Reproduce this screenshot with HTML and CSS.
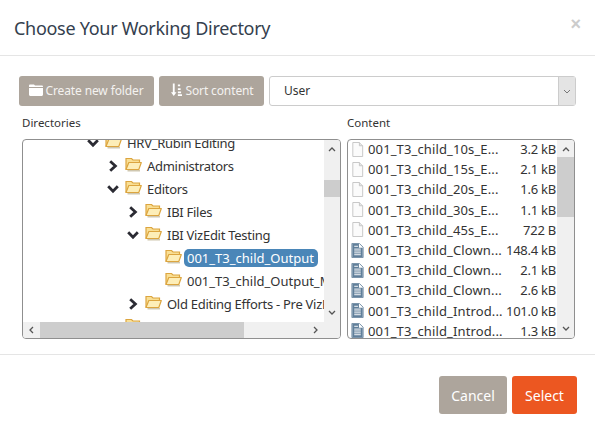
FILE: index.html
```html
<!DOCTYPE html>
<html lang="en">
<head>
<meta charset="utf-8">
<title>Choose Your Working Directory</title>
<link rel="stylesheet" href="styles.css">
</head>
<body>
<svg class="defs" width="0" height="0" aria-hidden="true">
  <symbol id="folder" viewBox="0 0 17 15">
    <path d="M2.500 13.700H15" stroke="#cfc7b0" stroke-width="1.500"/>
    <path d="M1 12.500V1.500H6.500L8 3H14.500V5" fill="#f9df94" stroke="#dca53f" stroke-width="1.200"/>
    <path d="M1 12.500L3.800 5.500H16.300L13.800 12.500Z" fill="#fdeeb8" stroke="#dca53f" stroke-width="1.200" stroke-linejoin="round"/>
  </symbol>
  <symbol id="right" viewBox="0 0 10 12">
    <path d="M2.200 1.200L7.400 6L2.200 10.800" fill="none" stroke="#2b2b33" stroke-width="2.800"/>
  </symbol>
  <symbol id="down" viewBox="0 0 12 10">
    <path d="M1.200 2.200L6 7.200L10.800 2.200" fill="none" stroke="#2b2b33" stroke-width="2.800"/>
  </symbol>
  <symbol id="plain" viewBox="0 0 13 16">
    <path d="M1.500.5H8.500L12 4V15.500H1.500Z" fill="#fbfbfb" stroke="#c4c4c4"/>
    <path d="M8.500.5V4H12" fill="#e6e6e6" stroke="#c4c4c4"/>
  </symbol>
  <symbol id="doc" viewBox="0 0 13 16">
    <path d="M.5.5H8.500L12.500 4.500V15.500H.5Z" fill="#fff" stroke="#6f8ba3"/>
    <path d="M1 1H8V5H12V15H1Z" fill="#607f9a"/>
    <path d="M3 3.500H7M3 6.500H10M3 8.500H10M3 10.500H10M3 12.500H10" stroke="#fff" stroke-width="1"/>
  </symbol>
</svg>
<main class="modal">
  <header class="modal-header">
    <h1 class="modal-title">Choose Your Working Directory</h1>
    <span class="close">×</span>
  </header>
  <section class="modal-body">
    <div class="toolbar">
      <button class="btn btn-tool btn-create">
        <svg class="tool-icon" viewBox="0 0 14 12"><path d="M0 3V1.600C0 .9.5.5 1.200.5H5L6 1.500H12.800C13.500 1.500 14 2 14 2.600V3ZM0 4H14V10.600C14 11.400 13.500 12 12.800 12H1.200C.5 12 0 11.400 0 10.600Z" fill="#fff"/></svg>Create new folder
      </button>
      <button class="btn btn-tool btn-sort">
        <svg class="tool-icon sort-icon" viewBox="0 0 12 14"><path d="M2 0H4V9.500H6L3 13.500L0 9.500H2Z" fill="#fff"/><path d="M7.500 1H10V3H7.500ZM7.500 5H10.500V7H7.500ZM7.500 8.500H11V10.500H7.500ZM7.500 11.500H12V13.500H7.500Z" fill="#fff"/></svg>Sort content
      </button>
      <div class="select">
        <span class="select-value">User</span>
        <span class="select-arrow"><svg width="8" height="5" viewBox="0 0 8 5"><path d="M1 1L4 4L7 1" fill="none" stroke="#777" stroke-width="1"/></svg></span>
      </div>
    </div>
    <div class="columns">
      <div class="col col-dirs">
        <div class="col-label">Directories</div>
        <div class="panel panel-tree">
          <div class="viewport">
            <ul class="tree">
              <li class="node d0"><svg class="chev chev-d"><use href="#down"/></svg><svg class="folder"><use href="#folder"/></svg><span class="name">HRV_Rubin Editing</span></li>
              <li class="node d1"><svg class="chev chev-r"><use href="#right"/></svg><svg class="folder"><use href="#folder"/></svg><span class="name">Administrators</span></li>
              <li class="node d1"><svg class="chev chev-d"><use href="#down"/></svg><svg class="folder"><use href="#folder"/></svg><span class="name">Editors</span></li>
              <li class="node d2"><svg class="chev chev-r"><use href="#right"/></svg><svg class="folder"><use href="#folder"/></svg><span class="name">IBI Files</span></li>
              <li class="node d2"><svg class="chev chev-d"><use href="#down"/></svg><svg class="folder"><use href="#folder"/></svg><span class="name">IBI VizEdit Testing</span></li>
              <li class="node d3"><span class="chev"></span><svg class="folder"><use href="#folder"/></svg><span class="name num selected">001_T3_child_Output</span></li>
              <li class="node d3"><span class="chev"></span><svg class="folder"><use href="#folder"/></svg><span class="name num">001_T3_child_Output_Manual</span></li>
              <li class="node d2"><svg class="chev chev-r"><use href="#right"/></svg><svg class="folder"><use href="#folder"/></svg><span class="name">Old Editing Efforts - Pre VizEdit</span></li>
              <li class="node d1"><span class="chev"></span><svg class="folder"><use href="#folder"/></svg><span class="name">Tech</span></li>
            </ul>
          </div>
          <div class="vbar vbar-tree">
            <svg class="arrow" viewBox="0 0 8 5"><path d="M1 4L4 1L7 4" fill="none" stroke="#555" stroke-width="1.300"/></svg>
            <div class="track"><div class="thumb"></div></div>
            <svg class="arrow" viewBox="0 0 8 5"><path d="M1 1L4 4L7 1" fill="none" stroke="#555" stroke-width="1.300"/></svg>
          </div>
          <div class="hbar">
            <svg class="arrow-h" viewBox="0 0 5 8"><path d="M4 1L1 4L4 7" fill="none" stroke="#555" stroke-width="1.300"/></svg>
            <div class="htrack"><div class="hthumb"></div></div>
            <svg class="arrow-h" viewBox="0 0 5 8"><path d="M1 1L4 4L1 7" fill="none" stroke="#555" stroke-width="1.300"/></svg>
          </div>
          <div class="corner"></div>
        </div>
      </div>
      <div class="col col-content">
        <div class="col-label">Content</div>
        <div class="panel panel-files">
          <ul class="files">
            <li class="file"><svg class="file-icon"><use href="#plain"/></svg><span class="file-name">001_T3_child_10s_E...</span><span class="file-size">3.2 kB</span></li>
            <li class="file"><svg class="file-icon"><use href="#plain"/></svg><span class="file-name">001_T3_child_15s_E...</span><span class="file-size">2.1 kB</span></li>
            <li class="file"><svg class="file-icon"><use href="#plain"/></svg><span class="file-name">001_T3_child_20s_E...</span><span class="file-size">1.6 kB</span></li>
            <li class="file"><svg class="file-icon"><use href="#plain"/></svg><span class="file-name">001_T3_child_30s_E...</span><span class="file-size">1.1 kB</span></li>
            <li class="file"><svg class="file-icon"><use href="#plain"/></svg><span class="file-name">001_T3_child_45s_E...</span><span class="file-size">722 B</span></li>
            <li class="file"><svg class="file-icon"><use href="#doc"/></svg><span class="file-name">001_T3_child_Clown...</span><span class="file-size">148.4 kB</span></li>
            <li class="file"><svg class="file-icon"><use href="#doc"/></svg><span class="file-name">001_T3_child_Clown...</span><span class="file-size">2.1 kB</span></li>
            <li class="file"><svg class="file-icon"><use href="#doc"/></svg><span class="file-name">001_T3_child_Clown...</span><span class="file-size">2.6 kB</span></li>
            <li class="file"><svg class="file-icon"><use href="#doc"/></svg><span class="file-name">001_T3_child_Introd...</span><span class="file-size">101.0 kB</span></li>
            <li class="file"><svg class="file-icon"><use href="#doc"/></svg><span class="file-name">001_T3_child_Introd...</span><span class="file-size">1.3 kB</span></li>
          </ul>
          <div class="vbar vbar-files">
            <svg class="arrow" viewBox="0 0 8 5"><path d="M1 4L4 1L7 4" fill="none" stroke="#555" stroke-width="1.300"/></svg>
            <div class="track"><div class="thumb"></div></div>
            <svg class="arrow" viewBox="0 0 8 5"><path d="M1 1L4 4L7 1" fill="none" stroke="#555" stroke-width="1.300"/></svg>
          </div>
        </div>
      </div>
    </div>
  </section>
  <footer class="modal-footer">
    <button class="btn btn-cancel">Cancel</button>
    <button class="btn btn-select">Select</button>
  </footer>
</main>
</body>
</html>
```
FILE: styles.css
```css
* { box-sizing: border-box; }
html, body { margin: 0; padding: 0; }
body {
  width: 595px;
  height: 433px;
  overflow: hidden;
  background: #fff;
  color: #2f3640;
  font-family: "Noto Sans", "Open Sans", sans-serif;
}
.defs { position: absolute; }
.modal { display: flex; flex-direction: column; height: 433px; }

.modal-header {
  height: 56px;
  padding: 0 14px;
  border-bottom: 1px solid #e5e5e5;
  display: flex;
  align-items: center;
  justify-content: space-between;
}
.modal-title {
  margin: 0;
  font-size: 18px;
  font-weight: 400;
  color: #34404e;
  letter-spacing: -.29px;
}
.close { color: #ccc; font-size: 18px; font-weight: 700; line-height: 1; font-family: "Liberation Sans", sans-serif; margin-bottom: 8px; }

.modal-body { height: 298px; padding: 20px 19px 0; }
.toolbar { display: flex; gap: 5px; height: 30px; }
.btn {
  border: 0;
  border-radius: 3px;
  color: #fff;
  background: #ada59c;
  font-family: inherit;
  padding: 0;
  display: flex;
  align-items: center;
  justify-content: center;
}
.btn-tool { font-size: 12px; color: #f4f2f0; letter-spacing: -.01em; padding-bottom: 2px; }
.btn-create { width: 135px; }
.btn-sort { width: 105px; padding-left: 2px; }
.tool-icon { width: 14px; height: 12px; margin-right: 2px; }
.sort-icon { width: 11px; height: 14px; margin-right: 3px; }
.select {
  width: 307px;
  border: 1px solid #ccc;
  border-radius: 3px;
  display: flex;
  align-items: stretch;
  justify-content: space-between;
  font-size: 12px;
  color: #333;
}
.select-value { padding: 0 0 2px 14px; align-self: center; }
.select-arrow {
  width: 17px;
  background: #e4e4e4;
  border-left: 1px solid #ccc;
  display: flex;
  align-items: center;
  justify-content: center;
}

.columns { display: flex; gap: 6px; margin-top: 9px; padding-left: 3px; }
.col-label { font-size: 11.500px; height: 24px; line-height: 16px; color: #333; }
.col-dirs { width: 319px; }
.col-content { width: 228px; }

.panel {
  height: 200px;
  border: 1px solid #8f8f8f;
  border-radius: 4px;
  overflow: hidden;
  display: grid;
  background: #fff;
}
.panel-tree { grid-template-columns: 1fr 16px; grid-template-rows: 1fr 16px; }
.panel-files { grid-template-columns: 1fr 17px; }

.viewport { overflow: hidden; min-width: 0; }
.tree { list-style: none; margin: -9px 0 0; padding: 0; width: 360px; }
.node {
  height: 23px;
  display: flex;
  align-items: center;
  white-space: nowrap;
  font-size: 13px;
  color: #333;
}
.d0 { padding-left: 63px; }
.d1 { padding-left: 83px; }
.d2 { padding-left: 103px; }
.d3 { padding-left: 123px; }
.chev { width: 14px; height: 12px; flex: none; }
.chev-d { height: 10px; }
.folder { width: 17px; height: 15px; flex: none; margin: -3px 2px 0 5px; }
.name { padding: 0 4px 0 3px; line-height: 18px; border-radius: 5px; letter-spacing: -.28px; }
.num { letter-spacing: 0; }
.selected { background: #4a86b8; color: #fff; }

.vbar {
  background: #f0f0f0;
  display: flex;
  flex-direction: column;
  align-items: center;
}
.arrow { width: 8px; height: 5px; margin: 7px 0; flex: none; }
.track { flex: 1; width: 100%; min-height: 0; }
.thumb { background: #cdcdcd; }
.vbar-tree .thumb { height: 17px; margin-top: 21px; }
.vbar-files .thumb { height: 60px; margin-top: -2px; }

.hbar {
  background: #f0f0f0;
  display: flex;
  align-items: center;
}
.corner { background: #f0f0f0; }
.arrow-h { width: 5px; height: 8px; margin: 0 6px; flex: none; }
.htrack { flex: 1; height: 100%; }
.hthumb { width: 204px; height: 100%; background: #cdcdcd; }

.files { list-style: none; margin: -1px 0 0; padding: 0; min-width: 0; overflow: hidden; }
.file {
  height: 20.200px;
  display: flex;
  align-items: center;
  font-size: 13px;
  color: #333;
  padding: 0 1px 0 3px;
}
.file-icon { width: 13px; height: 15px; flex: none; margin-right: 4px; }
.file-name { flex: 1; white-space: nowrap; letter-spacing: .13px; }
.file-size { white-space: nowrap; letter-spacing: -.25px; }

.modal-footer {
  flex: 1;
  border-top: 1px solid #e5e5e5;
  padding: 21px 18px 0 0;
  display: flex;
  justify-content: flex-end;
  gap: 5px;
}
.btn-cancel, .btn-select { height: 38px; font-size: 14px; }
.btn-cancel { width: 68px; }
.btn-select { width: 65px; background: #ec5721; }
```
